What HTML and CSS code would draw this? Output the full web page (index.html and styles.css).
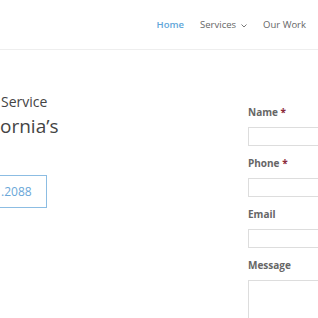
FILE: index.html
```html
<!DOCTYPE html>
<html lang="en">
<head>
    <meta charset="UTF-8">
    <meta name="viewport" content="width=device-width, initial-scale=1.0">
    <title>Service</title>
    <link rel="stylesheet" href="styles.css">
</head>
<body>
    <header class="site-header">
        <nav class="main-nav">
            <a href="#" class="active">Home</a>
            <a href="#">Services
                <svg class="caret" width="6" height="4" viewBox="0 0 6 4"><path d="M0.5 0.5 L3 3 L5.5 0.5" fill="none" stroke="#777" stroke-width="1"/></svg>
            </a>
            <a href="#">Our Work</a>
        </nav>
    </header>

    <main class="content">
        <section class="intro">
            <p class="eyebrow">Service</p>
            <h1 class="headline">ornia&rsquo;s</h1>
            <a href="#" class="call-btn">.2088</a>
        </section>

        <form class="quote-form">
            <label>Name <span class="mandatory">*</span></label>
            <input type="text" name="name">

            <label>Phone <span class="mandatory">*</span></label>
            <input type="text" name="phone">

            <label>Email</label>
            <input type="text" name="email">

            <label>Message</label>
            <textarea name="message"></textarea>
        </form>
    </main>
</body>
</html>
```

FILE: styles.css
```css
        html, body {
            overflow: hidden;
        }
        body {
            font-family: "Open Sans", "DejaVu Sans", sans-serif;
            background-color: #fff;
            margin: 0;
            height: 318px;
        }
        .site-header {
            height: 49px;
            border-bottom: 1px solid #eee;
            display: flex;
            justify-content: flex-end;
            align-items: center;
            padding-right: 12px;
        }
        .main-nav {
            display: flex;
            gap: 16px;
            font-size: 9.5px;
        }
        .main-nav a {
            color: #666;
            text-decoration: none;
            display: flex;
            align-items: center;
            gap: 5px;
        }
        .main-nav a.active {
            color: #5fa6d9;
            font-weight: 600;
        }
        .caret {
            margin-top: 2px;
        }

        .content {
            display: grid;
            grid-template-columns: 248px 70px;
            overflow: hidden;
        }
        .intro {
            padding-top: 42px;
        }
        .eyebrow {
            margin: 0;
            padding-left: 1px;
            font-size: 14px;
            line-height: 20px;
            color: #444;
        }
        .headline {
            margin: 2px 0 0;
            font-size: 19px;
            line-height: 24px;
            font-weight: 400;
            color: #444;
        }
        .call-btn {
            display: flex;
            align-items: center;
            width: 45px;
            height: 31px;
            margin-top: 37px;
            padding-left: 1px;
            border: 1px solid #8cbde3;
            border-left: none;
            box-sizing: content-box;
            font-size: 12px;
            color: #6aa7d8;
            text-decoration: none;
        }

        .quote-form {
            padding-top: 55px;
            display: flex;
            flex-direction: column;
            width: 240px;
        }
        .quote-form label {
            font-size: 10px;
            line-height: 14px;
            font-weight: bold;
            color: #666;
            margin-bottom: 8px;
        }
        .mandatory {
            color: #8b2a3a;
        }
        .quote-form input,
        .quote-form textarea {
            height: 19px;
            margin: 0 0 10px;
            padding: 0;
            border: 1px solid #ddd;
            box-sizing: border-box;
            width: 100%;
        }
        .quote-form textarea {
            height: 80px;
            resize: none;
        }
```
